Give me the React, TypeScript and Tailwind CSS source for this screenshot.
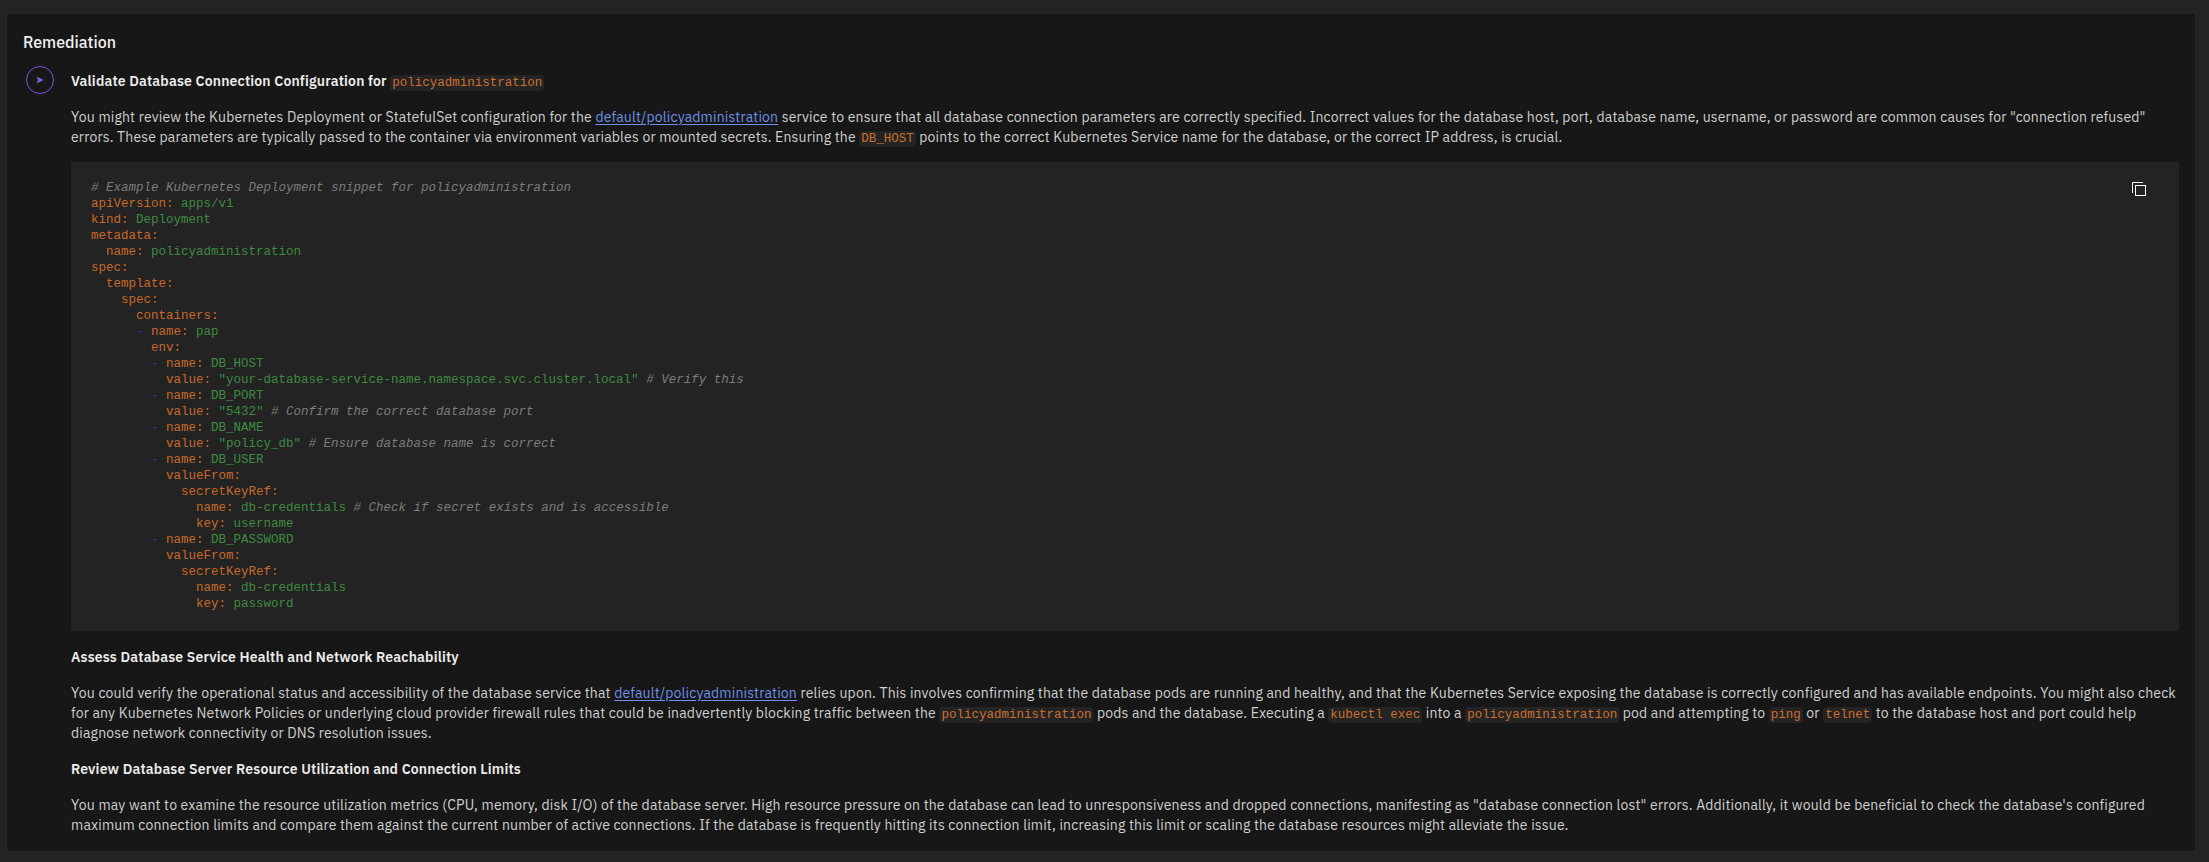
import React from 'react';

const sans = { fontFamily: '"IBM Plex Sans", Roboto, sans-serif' };

const Tag = ({ children }: { children: React.ReactNode }) => (
  <code className="rounded-sm bg-[#242424] px-[2px] py-[1px] font-['Liberation_Mono',monospace] text-[12.5px] font-normal leading-[14px] tracking-normal text-[#cc6f2f]">{children}</code>
);

const Svc = () => (
  <a className="text-[#6f8fe8] underline underline-offset-2">default/policyadministration</a>
);

const K = ({ children }: { children: React.ReactNode }) => <span className="text-[#c8692b]">{children}</span>;
const V = ({ children }: { children: React.ReactNode }) => <span className="text-[#3f8a42]">{children}</span>;
const C = ({ children }: { children: React.ReactNode }) => <span className="italic text-[#7d7d7d]">{children}</span>;
const D = () => <span className="text-[#26409c]">- </span>;

export default function App() {
  return (
    <div className="h-[862px] w-full overflow-hidden bg-[#232323] pb-[11px] pl-[7px] pr-[14px] pt-[14px]">
      <div className="h-full rounded-[3px] bg-[#171717] px-[16px] pt-[18px] text-[14px] leading-[20px] tracking-[0.17px] text-[#d0d0d0]" style={sans}>
        <h2 className="text-[16px] font-medium leading-[20px] tracking-normal text-[#f0f0f0]">Remediation</h2>
        <div className="mt-[14px] flex">
          <div className="w-[48px] shrink-0">
            <div className="ml-[3px] flex h-[28px] w-[28px] items-center justify-center rounded-full border border-[#7c52e0]">
              <svg width="8" height="8" viewBox="0 0 8 8"><path d="M0.5 0.5 L7.5 4 L0.5 7.5 L2 4 Z" fill="#8a5cf0" /></svg>
            </div>
          </div>
          <div className="min-w-0 flex-1">
            <h3 className="mt-[5px] font-semibold text-[#ececec]">Validate Database Connection Configuration for <Tag>policyadministration</Tag></h3>
            <p className="mt-[16px]">You might review the Kubernetes Deployment or StatefulSet configuration for the <Svc /> service to ensure that all database connection parameters are correctly specified. Incorrect values for the database host, port, database name, username, or password are common causes for "connection refused" errors. These parameters are typically passed to the container via environment variables or mounted secrets. Ensuring the <Tag>DB_HOST</Tag> points to the correct Kubernetes Service name for the database, or the correct IP address, is crucial.</p>
            <div className="relative mt-[15px] h-[469px] bg-[#232323] pl-[20px] pt-[18px]">
              <svg className="absolute right-[33px] top-[20px]" width="14" height="14" viewBox="0 0 14 14" fill="none" stroke="#ffffff" strokeWidth="1">
                <rect x="3.5" y="3.5" width="10" height="10" />
                <path d="M0.5 11 V0.5 H11" />
              </svg>
              <pre className="font-['Liberation_Mono',monospace] text-[12.5px] leading-[16px] tracking-normal">
<C># Example Kubernetes Deployment snippet for policyadministration</C>{'\n'}
<K>apiVersion:</K> <V>apps/v1</V>{'\n'}
<K>kind:</K> <V>Deployment</V>{'\n'}
<K>metadata:</K>{'\n'}
{'  '}<K>name:</K> <V>policyadministration</V>{'\n'}
<K>spec:</K>{'\n'}
{'  '}<K>template:</K>{'\n'}
{'    '}<K>spec:</K>{'\n'}
{'      '}<K>containers:</K>{'\n'}
{'      '}<D /><K>name:</K> <V>pap</V>{'\n'}
{'        '}<K>env:</K>{'\n'}
{'        '}<D /><K>name:</K> <V>DB_HOST</V>{'\n'}
{'          '}<K>value:</K> <V>"your-database-service-name.namespace.svc.cluster.local"</V> <C># Verify this</C>{'\n'}
{'        '}<D /><K>name:</K> <V>DB_PORT</V>{'\n'}
{'          '}<K>value:</K> <V>"5432"</V> <C># Confirm the correct database port</C>{'\n'}
{'        '}<D /><K>name:</K> <V>DB_NAME</V>{'\n'}
{'          '}<K>value:</K> <V>"policy_db"</V> <C># Ensure database name is correct</C>{'\n'}
{'        '}<D /><K>name:</K> <V>DB_USER</V>{'\n'}
{'          '}<K>valueFrom:</K>{'\n'}
{'            '}<K>secretKeyRef:</K>{'\n'}
{'              '}<K>name:</K> <V>db-credentials</V> <C># Check if secret exists and is accessible</C>{'\n'}
{'              '}<K>key:</K> <V>username</V>{'\n'}
{'        '}<D /><K>name:</K> <V>DB_PASSWORD</V>{'\n'}
{'          '}<K>valueFrom:</K>{'\n'}
{'            '}<K>secretKeyRef:</K>{'\n'}
{'              '}<K>name:</K> <V>db-credentials</V>{'\n'}
{'              '}<K>key:</K> <V>password</V>
              </pre>
            </div>
            <h3 className="mt-[16px] font-semibold text-[#ececec]">Assess Database Service Health and Network Reachability</h3>
            <p className="mt-[16px]">You could verify the operational status and accessibility of the database service that <Svc /> relies upon. This involves confirming that the database pods are running and healthy, and that the Kubernetes Service exposing the database is correctly configured and has available endpoints. You might also check for any Kubernetes Network Policies or underlying cloud provider firewall rules that could be inadvertently blocking traffic between the <Tag>policyadministration</Tag> pods and the database. Executing a <Tag>kubectl exec</Tag> into a <Tag>policyadministration</Tag> pod and attempting to <Tag>ping</Tag> or <Tag>telnet</Tag> to the database host and port could help diagnose network connectivity or DNS resolution issues.</p>
            <h3 className="mt-[16px] font-semibold text-[#ececec]">Review Database Server Resource Utilization and Connection Limits</h3>
            <p className="mt-[16px]">You may want to examine the resource utilization metrics (CPU, memory, disk I/O) of the database server. High resource pressure on the database can lead to unresponsiveness and dropped connections, manifesting as "database connection lost" errors. Additionally, it would be beneficial to check the database's configured maximum connection limits and compare them against the current number of active connections. If the database is frequently hitting its connection limit, increasing this limit or scaling the database resources might alleviate the issue.</p>
          </div>
        </div>
      </div>
    </div>
  );
}
